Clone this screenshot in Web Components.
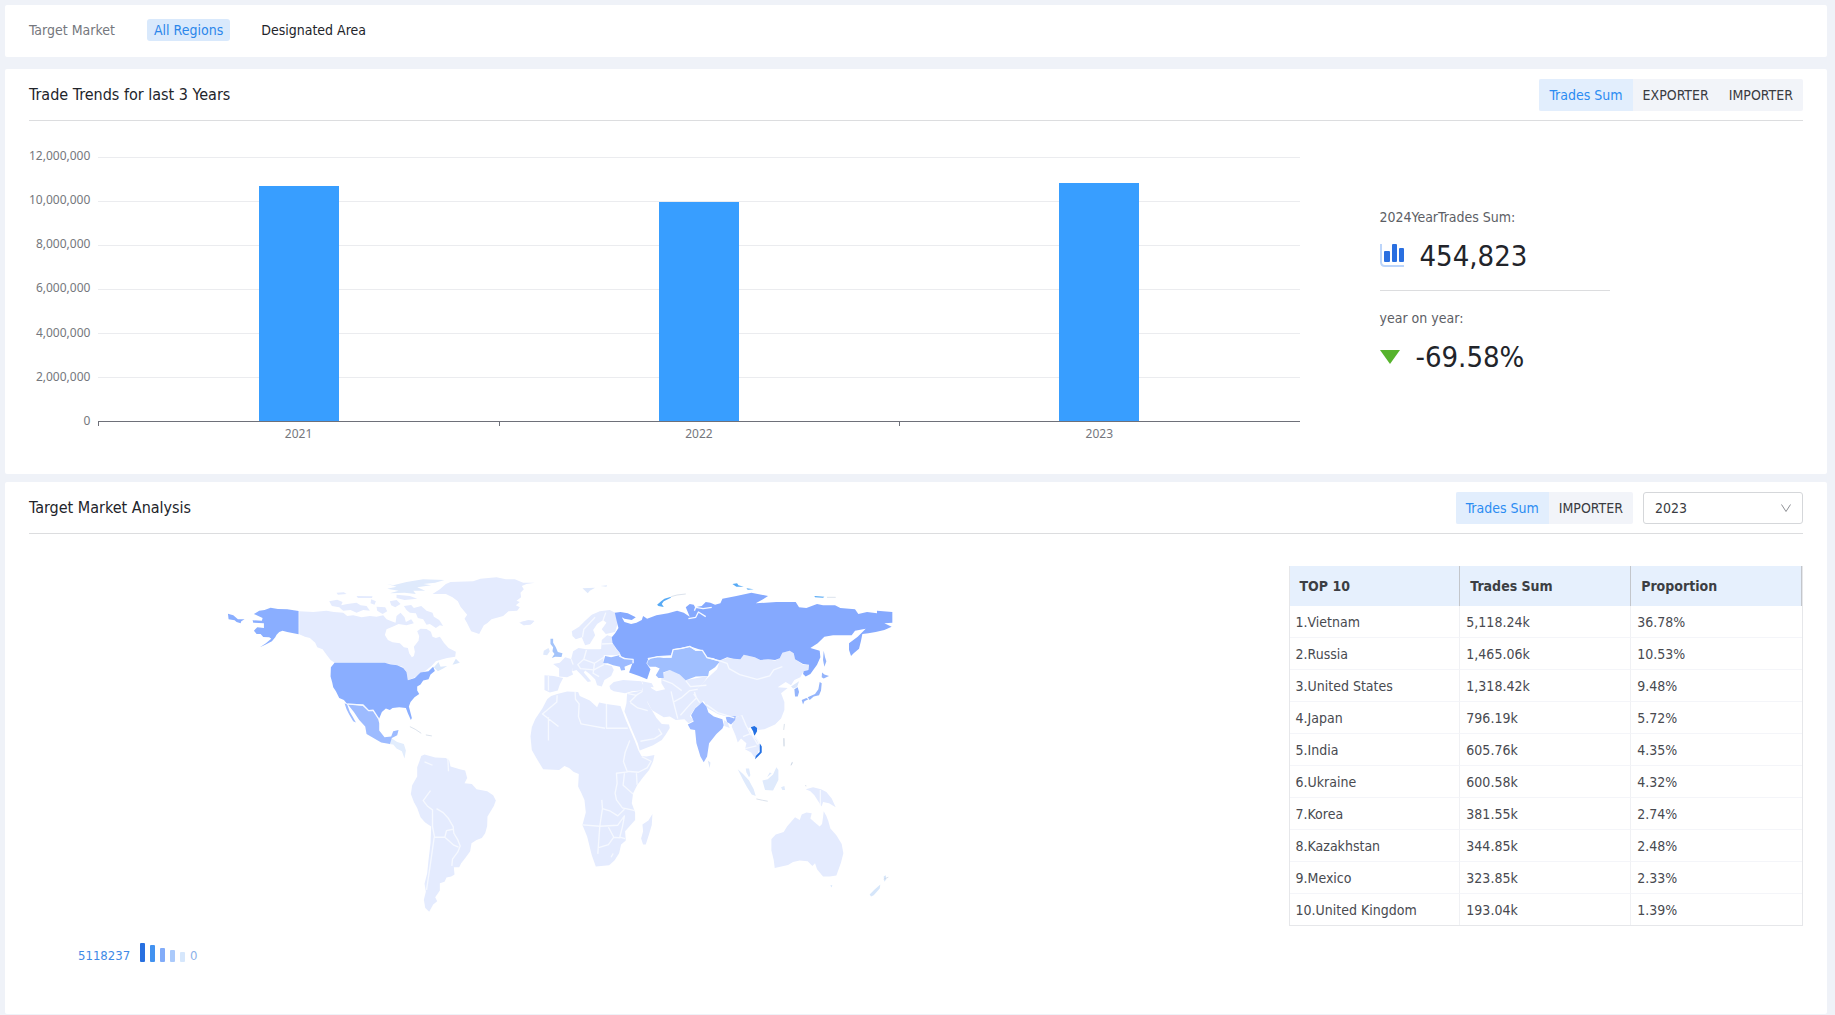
<!DOCTYPE html>
<html lang="en">
<head>
<meta charset="UTF-8">
<meta name="viewport" content="width=device-width, initial-scale=1">
<title>Target Market</title>
<style>
body{
    margin:0;
    background:#eff2f8;
    color:#22242a;
    font:14px/22px "DejaVu Sans Condensed",Tahoma,"Noto Sans",sans-serif;
}
</style>
</head>
<body>
<trade-dashboard></trade-dashboard>

<script>
class RegionFilter extends HTMLElement {

    constructor() {
        super();
        const shadowRoot = this.attachShadow({ mode: 'open' });
        shadowRoot.innerHTML = `
        <style>
        :host{
            display:flex;
            align-items:center;
            gap:32px;
            padding:14px 24px 16px;
            background:#fff;
            border-radius:2px;
        }
        .label{
            color:#75777d;
        }
        .items{
            display:flex;
            gap:24px;
        }
        button{
            padding:0 7px;
            border:0;
            border-radius:3px;
            background:none;
            color:inherit;
            font:inherit;
            cursor:pointer;
        }
        button[aria-pressed=true]{
            background:#d9e9fc;
            color:#2b86ea;
        }
        </style>
        <span class="label" id="label">Target Market</span>
        <div class="items" role="group" aria-labelledby="label">
            <button type="button" aria-pressed="true">All Regions</button>
            <button type="button" aria-pressed="false">Designated Area</button>
        </div>
        `
    }

    connectedCallback() {
        const buttons = [...this.shadowRoot.querySelectorAll('button')];
        buttons.forEach(el=>el.addEventListener('click',()=>{
            buttons.forEach(b=>b.setAttribute('aria-pressed', b===el));
        }))
    }
}

class PanelCard extends HTMLElement {

    constructor() {
        super();
        const shadowRoot = this.attachShadow({ mode: 'open' });
        shadowRoot.innerHTML = `
        <style>
        :host{
            display:block;
            padding:0 24px;
            background:#fff;
            border-radius:2px;
        }
        header{
            display:flex;
            align-items:center;
            justify-content:space-between;
            padding:10px 0 9px;
            border-bottom:1px solid #dcdddf;
        }
        h2{
            margin:0;
            font-size:16px;
            font-weight:400;
        }
        .extra{
            display:flex;
            gap:10px;
        }
        </style>
        <header>
            <h2>${this.getAttribute('heading')}</h2>
            <div class="extra"><slot name="extra"></slot></div>
        </header>
        <slot></slot>
        `
    }
}

class SegmentTabs extends HTMLElement {

    constructor() {
        super();
        const shadowRoot = this.attachShadow({ mode: 'open' });
        const items = this.getAttribute('items').split(',');
        shadowRoot.innerHTML = `
        <style>
        :host{
            display:flex;
            border-radius:2px;
            background:#f2f4f9;
            overflow:hidden;
        }
        button{
            height:32px;
            padding:0 10px;
            border:0;
            background:none;
            color:#3a3c42;
            font:inherit;
            cursor:pointer;
        }
        button[aria-selected=true]{
            background:#e2eefd;
            color:#2b8cf2;
        }
        </style>
        ${items.map((text,i)=>`<button type="button" role="tab" aria-selected="${i===0}">${text}</button>`).join('')}
        `
    }

    connectedCallback() {
        this.setAttribute('role', 'tablist');
        const tabs = [...this.shadowRoot.querySelectorAll('button')];
        tabs.forEach(el=>el.addEventListener('click',()=>{
            tabs.forEach(t=>t.setAttribute('aria-selected', t===el));
            this.dispatchEvent(new CustomEvent('change', {
                detail: {
                    value: el.textContent
                }
            }));
        }))
    }
}

class YearSelect extends HTMLElement {

    constructor() {
        super();
        const shadowRoot = this.attachShadow({ mode: 'open' });
        shadowRoot.innerHTML = `
        <style>
        :host{
            display:grid;
            width:160px;
            align-items:center;
        }
        select,svg{
            grid-area:1/1;
        }
        select{
            box-sizing:border-box;
            width:100%;
            height:32px;
            padding:0 11px;
            border:1px solid #d5d7da;
            border-radius:3px;
            background:#fff;
            color:#3a3c42;
            font:inherit;
            appearance:none;
        }
        svg{
            justify-self:end;
            margin-right:11px;
            pointer-events:none;
        }
        </style>
        <select aria-label="Year">
            <option>2023</option>
            <option>2022</option>
            <option>2021</option>
        </select>
        <svg width="12" height="12" viewBox="0 0 12 12" fill="none" stroke="#8e9095"><path d="M1.500 2.500 6 9.500l4.500-7"/></svg>
        `
    }
}

class BarChart extends HTMLElement {

    constructor() {
        super();
        const shadowRoot = this.attachShadow({ mode: 'open' });
        const max = 12000000;
        const step = 2000000;
        const data = [['2021',10700000],['2022',9940000],['2023',10840000]];
        const ticks = [];
        for (let v = max; v >= 0; v -= step) ticks.push(v);
        shadowRoot.innerHTML = `
        <style>
        :host{
            display:grid;
            grid-template-columns:max-content 1fr;
            column-gap:8px;
            color:#75777d;
            font:12px/20px "Noto Sans","Open Sans",sans-serif;
        }
        .scale{
            display:flex;
            flex-direction:column;
            justify-content:space-between;
            margin:-11px 0 -9px;
            text-align:right;
        }
        .plot{
            display:flex;
            height:264px;
            border-bottom:1px solid #6e7079;
            background:repeating-linear-gradient(#ebecef 0 1px,transparent 1px 44px);
        }
        .slot{
            display:flex;
            flex:1;
            align-items:flex-end;
            justify-content:center;
        }
        .bar{
            width:20%;
            background:#389eff;
        }
        .names{
            display:flex;
            grid-column:2;
        }
        .names span{
            flex:1;
            padding-top:2px;
            text-align:center;
            /* axis tick at the left end of each category */
            background:linear-gradient(#6e7079,#6e7079) 0 0/1px 4px no-repeat;
        }
        </style>
        <div class="scale">${ticks.map(v=>`<span>${v.toLocaleString('en-US')}</span>`).join('')}</div>
        <div class="plot">${data.map(([,v])=>`<div class="slot"><div class="bar" style="height:${v/max*100}%"></div></div>`).join('')}</div>
        <div class="names">${data.map(([name])=>`<span>${name}</span>`).join('')}</div>
        `
    }
}

class StatItem extends HTMLElement {

    constructor() {
        super();
        const shadowRoot = this.attachShadow({ mode: 'open' });
        shadowRoot.innerHTML = `
        <style>
        :host{
            display:block;
        }
        .label{
            margin-bottom:13px;
            color:#5c5e65;
        }
        .value{
            display:flex;
            align-items:center;
            gap:16px;
            font-size:29px;
            line-height:30px;
        }
        </style>
        <div class="label"><slot name="label"></slot></div>
        <div class="value"><slot name="icon"></slot><slot></slot></div>
        `
    }
}

// outlines are grouped by continent, each group has its own origin
const LAND = '#e4ebfe';
const MAP = [
    { at: '-30 0', shapes: [
        [LAND,'M268 154 310 156 350 152 372 156 400 158 412 168 430 166 455 172 480 168 500 170 520 166 530 178 545 184 557 188 560 168 572 158 584 172 588 186 604 178 612 190 590 196 566 192 548 200 530 208 525 225 534 240 548 247 570 250 582 262 594 264 598 280 606 292 612 288 615 275 612 260 626 242 628 228 622 214 632 206 650 207 663 215 668 230 678 234 690 230 702 248 716 264 738 275 736 290 712 294 698 298 678 304 665 318 640 338 615 352 594 361 590 335 578 320 555 314 525 308 374 308 362 300 350 284 338 268 322 262 316 248 300 234 285 230 268 223Z'],
        [LAND,'M582 138 604 135 612 144 634 138 650 152 668 158 672 170 688 180 700 198 690 196 678 204 660 192 650 194 640 178 624 174 618 160 600 158 590 150Z'],
        [LAND,'M358 124 382 119 398 126 394 136 412 132 440 128 452 136 470 138 480 152 460 150 440 158 422 150 400 152 388 142 366 138Z'],
        [LAND,'M484 118 498 124 494 134 482 130ZM500 140 526 142 532 154 518 162 502 152ZM540 124 560 120 572 132 556 142 544 136ZM560 104 600 108 622 116 584 120 560 114ZM380 98 402 97 410 102 384 104ZM440 108 488 109 486 114 444 114Z'],
        ['#dfeafc','M530 71 550 76 590 66 640 58 704 60 676 68 640 72 664 76 622 82 646 92 610 92 618 102 584 98 540 100 566 92 532 86 560 80Z'],
        [LAND,'M668 102 690 88 708 72 722 66 790 64 812 56 860 52 888 58 915 58 940 68 975 68 950 72 936 78 942 88 932 98 934 112 920 122 930 126 918 136 930 142 922 152 896 154 880 168 845 178 832 190 822 196 808 222 784 214 770 186 764 176 772 164 752 140 744 124 728 112 708 102Z'],
        [LAND,'M928 188 950 182 973 182 966 191 944 196Z'],
        ['#dbe8fb','M728 314 738 296 750 308ZM672 322 686 306 692 320 712 318 700 326 684 334Z'],
        ['#e2edfd','M536 552 546 536 562 546 582 552 588 572 584 596 576 574 560 566 550 554Z'],
        ['#8aaeff','M182 143 204 147 232 148 266 153 266 223 232 216 218 212 208 216 200 224 196 232 186 244 166 254 150 262 168 250 184 236 178 232 160 231 152 222 140 222 132 212 142 202 162 204 162 190 130 188 128 181 156 182 158 174 132 162 148 152 164 150Z'],
        ['#8aaeff','M54 161 70 166 84 178 104 178 94 184 92 190 80 186 74 181 56 178Z'],
        ['#8aaeff','M374 308 525 308 540 313 562 316 580 324 590 336 594 361 615 354 632 338 656 334 670 320 675 333 662 344 656 358 640 362 632 374 622 380 622 392 628 402 614 412 602 426 597 440 606 474 603 480 594 460 588 444 568 442 548 444 540 450 528 446 516 456 508 476 498 468 490 450 476 450 460 434 412 432 402 420 388 414 378 394 370 382 367 368 362 350 363 322Z'],
        ['#9dbbff','M414 434 458 437 475 452 489 452 504 474 508 490 508 512 524 532 544 530 550 514 566 510 562 526 546 534 540 552 514 548 470 522 466 500 448 480 432 456ZM404 430 412 434 420 456 428 470 438 488 430 484 418 464 410 448Z'],
    ], lines: ['M412 432 460 436 476 452 490 451 506 476'], thin: ['M600 500 616 508 634 520M648 525 666 528'] },
    { at: '480 510', shapes: [
        [LAND,'M124 78 134 74 150 78 166 83 198 84 208 92 212 110 240 118 256 122 262 144 254 160 276 162 290 178 322 184 340 196 348 212 342 228 323 260 322 288 316 310 306 324 290 330 275 340 271 364 258 382 244 400 238 412 222 412 224 434 214 440 200 443 194 456 180 460 180 482 166 502 172 514 160 524 148 546 136 534 132 510 138 486 134 462 142 430 146 390 152 340 154 290 136 278 122 262 112 234 102 216 93 192 97 166 112 140 112 112 118 96Z'],
    ], lines: ['M152 182 130 212 144 230 158 240 158 290 164 322 195 322 222 346 236 352','M170 236 190 248 206 266 220 290 222 310 234 330 241 348 234 366 218 388 216 408','M195 322 200 302 220 298','M163 322 152 400 140 480','M134 96 158 106 M204 86 206 124'] },
    { at: '870 30', shapes: [
        [LAND,'M142 372 172 365 205 366 210 378 240 392 262 412 268 398 290 402 332 408 338 424 348 450 360 478 374 510 386 542 395 558 410 560 434 555 430 574 418 600 400 622 382 646 370 670 366 700 376 728 376 750 362 766 346 784 348 812 334 824 328 850 314 872 298 886 258 890 246 856 232 800 218 765 228 728 224 690 214 668 205 650 207 612 192 606 178 594 164 588 148 600 100 598 80 565 66 540 62 500 66 472 76 448 98 415 112 388 124 378Z'],
        [LAND,'M428 732 426 765 418 792 408 824 400 824 394 806 400 784 398 764 416 752Z'],
        [LAND,'M299 348 312 336 340 330 395 334 400 346 396 362 366 364 346 370 312 364 302 358Z'],
        [LAND,'M352 370 398 362 408 376 414 400 426 420 440 444 456 462 478 464 480 474 468 494 456 510 430 526 390 542 384 520 366 478 344 424 350 400Z'],
        [LAND,'M104 316 132 318 160 324 150 344 144 362 120 368 104 360Z'],
        [LAND,'M130 282 150 278 166 262 186 268 190 284 186 304 190 314 172 322 148 320 148 296Z'],
        [LAND,'M190 244 206 234 230 238 270 238 288 234 282 256 280 282 306 288 312 300 304 318 284 330 276 350 262 346 256 328 240 312 226 302 222 308 244 334 234 336 212 312 200 300 188 304 184 268Z'],
        [LAND,'M186 184 208 170 226 152 246 134 270 124 300 120 316 128 324 160 316 186 288 192 276 178 290 158 280 150 262 162 250 180 256 196 240 222 226 226 216 202 198 208 188 198Z'],
        [LAND,'M276 210 292 196 308 200 308 216 318 236 334 252 318 256 282 256 274 236Z'],
        [LAND,'M396 334 426 340 432 352 404 350Z'],
        ['#dfe9fc','M102 242 116 234 120 244 112 256 100 254ZM218 55 256 53 240 62 234 70ZM272 48 292 46 290 50Z'],
        [LAND,'M32 156 56 150 74 153 62 164 40 166Z'],
        ['#a4c4fa','M122 206 130 206 130 218 138 232 144 246 158 250 155 261 136 260 126 264 134 252 128 244 130 232 122 222Z'],
    ], lines: ['M142 376 141 396 98 432 146 470','M196 366 197 388 208 402 206 440 214 462 246 468 286 475','M290 402 290 475 354 475','M116 442 116 512','M360 512 346 548 341 575 352 604 386 607 412 594 424 574 396 560','M354 606 320 610 322 640 316 670 320 690 338 714 376 722','M344 610 340 646 370 672','M380 610 382 645','M276 690 278 716 302 724 324 738 344 718','M218 765 270 769 324 766 344 738 338 770 330 802 346 806','M278 716 270 769 264 852','M264 834 296 824 312 802 296 772','M312 802 332 804','M304 862 310 851','M352 370 380 376 404 360','M362 398 384 414 414 422','M360 396 384 372','M392 514 434 506 456 492 446 476','M190 284 184 268M230 240 222 268 254 280 282 262M222 268 204 284 212 296 252 300 282 284M254 280 250 310 268 320','M218 202 222 178 256 142M288 128 280 150','M276 222 312 220','M116 318 116 362','M400 354 420 364'] },
    { at: '1110 30', shapes: [
        [LAND,'M156 344 174 340 186 356 200 364 226 358 215 340 215 312 240 300 270 310 290 330 355 318 340 340 322 358 340 386 338 398 322 408 312 420 300 438 312 452 296 460 284 448 258 450 240 440 222 442 202 430 186 420 172 394 160 372Z'],
        [LAND,'M390 272 412 264 432 266 452 268 462 254 495 262 512 270 535 268 556 272 570 265 578 248 600 242 612 250 616 268 640 284 658 284 654 300 640 306 632 322 614 330 604 346 588 336 564 352 594 354 574 370 584 396 584 420 574 446 556 464 524 478 506 480 490 470 476 474 462 460 455 436 434 444 410 440 384 432 352 414 344 396 322 376 324 356 356 322 382 298Z'],
        [LAND,'M436 444 455 435 464 462 478 478 488 496 502 512 510 530 504 552 494 562 484 548 466 538 470 520 454 506 444 518 438 498 426 470 430 456Z'],
        [LAND,'M402 450 414 458 420 474 404 468Z'],
        ['#dce7fb','M604 350 628 334 622 352 610 356ZM354 572 362 578 360 594Z'],
        ['#85a9fe','M75 128 92 126 114 130 138 142 126 150 104 146 96 142 104 156 124 162 140 158 156 150 160 138 172 146 200 136 235 130 262 122 282 128 300 140 288 112 300 102 312 104 316 112 336 108 348 96 362 98 376 104 392 100 398 86 440 78 485 68 535 78 520 88 498 100 560 96 618 96 628 112 650 114 682 102 700 106 736 106 752 114 796 118 806 132 832 126 862 130 862 122 908 126 908 158 884 160 906 170 884 180 858 186 836 190 818 192 814 212 808 236 792 250 784 258 778 240 778 220 804 200 828 176 796 182 786 196 730 196 704 200 684 220 662 234 690 242 692 262 682 284 662 312 648 320 640 312 642 304 656 300 658 284 640 282 616 268 612 250 600 242 578 248 570 265 556 270 535 268 512 270 495 262 462 254 452 268 432 266 412 262 388 272 370 264 350 262 334 240 300 229 250 238 244 256 206 258 176 266 170 280 182 298 172 328 148 318 118 308 130 274 108 264 95 262 90 248 80 236 68 218 66 202 76 190 86 174 80 150Z'],
        ['#a0bfff','M174 272 186 264 208 260 222 264 244 262 250 240 276 236 300 231 318 242 338 242 352 264 390 275 376 292 358 304 355 318 318 320 288 331 270 314 240 300 220 308 222 324 206 324 198 316 210 296 198 290 180 290 172 282Z'],
        ['#9dbbff','M46 258 64 262 88 256 104 266 128 268 130 280 104 290 106 300 94 302 90 290 70 286 54 280 40 280Z'],
        ['#9bb8ff','M338 396 350 410 356 428 372 440 398 448 402 466 398 476 380 492 358 520 352 560 342 577 332 560 320 520 316 480 302 478 294 464 312 455 304 436 316 416ZM408 442 438 438 436 450 424 464 412 456Z'],
        ['#94b4fb','M614 358 624 352 628 366 624 380 616 380ZM690 336 696 340 694 362 688 376 672 380 660 390 654 382 676 372 686 358ZM636 390 650 384 656 388 644 394 640 404ZM697 308 704 314 718 318 702 326 696 322ZM702 242 706 262 710 274 704 290 700 270Z'],
        ['#2471e4','M483 472 494 468 502 474 502 484 494 498 490 484ZM510 520 516 530 516 548 506 558 496 568 498 558 510 546Z'],
        ['#57aaf5','M202 104 214 94 224 86 244 80 242 84 222 94 216 102 222 111 206 108ZM428 42 442 40 446 46 462 50 440 50ZM470 55 492 58 474 59ZM674 78 704 80 700 83 676 82Z'],
    ], lines: ['M388 272 412 280 418 296 450 314 502 328 540 318 552 300 578 290','M174 266 206 260 244 262 250 239 276 235 300 229 318 241 338 241 352 263 388 272','M244 364 252 400 264 446','M252 396 274 384 300 362 322 358','M218 330 246 340 276 362','M272 436 300 404 320 384 314 366','M288 332 302 350 350 346','M312 372 330 398M350 404 384 428 434 444','M456 436 470 468 484 496M460 500 484 490 504 524M466 536 500 528','M494 497 510 520','M88 258 104 266 130 268 130 280','M296 146 318 142 326 126 348 140M314 122 318 112 340 116 366 112'], thin: ['M244 80 262 75 288 72M584 462 582 480M583 505 583 528M604 586 608 576M712 82 738 82'] },
    { at: '1380 360', shapes: [
        [LAND,'M275 478 288 464 312 456 322 440 346 412 360 420 366 404 380 398 396 400 392 416 408 430 420 440 427 432 430 412 432 394 440 408 446 424 452 446 470 466 486 492 491 520 484 548 470 587 450 590 430 590 412 568 406 550 398 558 384 544 360 542 340 546 325 555 285 564 282 540 275 512Z'],
        [LAND,'M378 328 400 322 424 328 440 336 456 356 468 382 448 370 430 366 426 380 414 362 404 346 392 334Z'],
        ['#dfeafc','M174 268 190 282 208 302 222 328 228 348 216 344 202 322 190 300ZM198 266 208 266 212 286 208 292 200 278ZM248 302 264 298 280 284 290 262 296 270 296 300 280 332 256 330ZM262 292 276 280 270 278ZM304 322 314 318 316 330 308 330Z'],
        ['#d6e6fa','M570 644 584 630 602 614 600 626 582 646 574 650ZM612 590 618 586 620 598 614 606ZM452 616 458 616 455 623Z'],
    ], lines: ['M422 330 422 376'], thin: ['M230 357 248 361 264 364M312 175 313 200M334 256 338 248M376 317 380 318M612 598 626 592'] },
];

class WorldMap extends HTMLElement {

    constructor() {
        super();
        const shadowRoot = this.attachShadow({ mode: 'open' });
        const group = ({ at, shapes, lines, thin = [] })=>`
            <g transform="translate(${at})">
                ${shapes.map(([fill,d])=>`<path fill="${fill}" d="${d}"/>`).join('')}
                <path class="line" d="${lines.join('')}"/>
                <path class="thin" d="${thin.join('')}"/>
            </g>`;
        shadowRoot.innerHTML = `
        <style>
        :host{
            display:block;
        }
        svg{
            display:block;
            width:100%;
        }
        .line,.thin{
            fill:none;
            stroke:#f6f9ff;
            stroke-width:4;
            stroke-linejoin:round;
        }
        .thin{
            stroke:#c9d3e2;
            stroke-width:2;
        }
        </style>
        <svg viewBox="-573 0 3780 1080" role="img" aria-label="Trades by country">${MAP.map(group).join('')}</svg>
        `
    }
}

class MapLegend extends HTMLElement {

    constructor() {
        super();
        const shadowRoot = this.attachShadow({ mode: 'open' });
        const bars = [['#2870e0',19],['#4292f0',17],['#82acf9',14],['#abcafb',12],['#d6e7fc',10]];
        shadowRoot.innerHTML = `
        <style>
        :host{
            display:flex;
            align-items:flex-end;
            color:#3f8ae6;
            font-size:13px;
            line-height:13px;
        }
        .bars{
            display:flex;
            align-items:flex-end;
            gap:5px;
            margin:0 5px 0 10px;
        }
        i{
            width:5px;
            border-radius:1px;
        }
        .min{
            color:#8bb1ea;
        }
        </style>
        <span>5118237</span>
        <div class="bars">${bars.map(([color,h])=>`<i style="height:${h}px;background:${color}"></i>`).join('')}</div>
        <span class="min">0</span>
        `
    }
}

class RankTable extends HTMLElement {

    constructor() {
        super();
        const shadowRoot = this.attachShadow({ mode: 'open' });
        const rows = [
            ['Vietnam','5,118.24k','36.78%'],
            ['Russia','1,465.06k','10.53%'],
            ['United States','1,318.42k','9.48%'],
            ['Japan','796.19k','5.72%'],
            ['India','605.76k','4.35%'],
            ['Ukraine','600.58k','4.32%'],
            ['Korea','381.55k','2.74%'],
            ['Kazakhstan','344.85k','2.48%'],
            ['Mexico','323.85k','2.33%'],
            ['United Kingdom','193.04k','1.39%'],
        ];
        shadowRoot.innerHTML = `
        <style>
        :host{
            display:block;
        }
        table{
            width:100%;
            table-layout:fixed;
            border-collapse:separate;
            border-spacing:0;
            border:1px solid #e6e7ea;
            border-top:0;
            color:#484a50;
            text-align:left;
        }
        th{
            height:40px;
            padding:0 10px;
            background:#e6f0fd;
            border-right:1px solid #c3c6cb;
            color:#3c3e43;
            font-weight:700;
        }
        td{
            height:31px;
            padding:0 6px;
            border-right:1px solid #f0f1f4;
            border-bottom:1px solid #f4f5f9;
        }
        td:last-child{
            border-right:0;
        }
        tr:last-child td{
            border-bottom:0;
        }
        </style>
        <table>
            <thead><tr><th scope="col">TOP 10</th><th scope="col">Trades Sum</th><th scope="col">Proportion</th></tr></thead>
            <tbody>${rows.map(([name,sum,rate],i)=>`<tr><td>${i+1}.${name}</td><td>${sum}</td><td>${rate}</td></tr>`).join('')}</tbody>
        </table>
        `
    }
}

class TradeDashboard extends HTMLElement {

    constructor() {
        super();
        const shadowRoot = this.attachShadow({ mode: 'open' });
        shadowRoot.innerHTML = `
        <style>
        :host{
            box-sizing:border-box;
            display:flex;
            flex-direction:column;
            min-height:100vh;
            padding:5px 8px 1px 5px;
        }
        region-filter{
            margin-bottom:12px;
        }
        .trends{
            margin-bottom:8px;
        }
        .analysis{
            flex:1;
        }
        .trend-body{
            display:grid;
            grid-template-columns:3fr 1fr;
            gap:80px;
            padding:36px 0 30px;
        }
        .stats{
            padding-top:49px;
        }
        .stats hr{
            width:230px;
            margin:19px 0 16px;
            border:0;
            border-top:1px solid #dcdddf;
        }
        .market-body{
            display:grid;
            grid-template-columns:71fr 29fr;
            padding-top:32px;
        }
        world-map{
            margin-top:-6px;
        }
        map-legend{
            margin:23px 0 0 49px;
        }
        svg{
            display:block;
        }
        </style>
        <region-filter></region-filter>
        <panel-card class="trends" heading="Trade Trends for last 3 Years">
            <segment-tabs slot="extra" items="Trades Sum,EXPORTER,IMPORTER"></segment-tabs>
            <div class="trend-body">
                <bar-chart></bar-chart>
                <div class="stats">
                    <stat-item>
                        <span slot="label">2024YearTrades Sum:</span>
                        <svg slot="icon" width="24" height="24" viewBox="0 0 24 24">
                            <path d="M1 0v18q0 4 4 4h19" fill="none" stroke="#bcd5fa" stroke-width="2"/>
                            <g fill="#2a6fe0"><rect x="4" y="7" width="6" height="11" rx="1"/><rect x="12" y="0" width="5" height="18" rx="1"/><rect x="19" y="4" width="5" height="14" rx="1"/></g>
                        </svg>
                        454,823
                    </stat-item>
                    <hr>
                    <stat-item>
                        <span slot="label">year on year:</span>
                        <svg slot="icon" width="20" height="14" viewBox="0 0 20 14"><path d="M0 0h20L10 14z" fill="#56b32c"/></svg>
                        -69.58%
                    </stat-item>
                </div>
            </div>
        </panel-card>
        <panel-card class="analysis" heading="Target Market Analysis">
            <segment-tabs slot="extra" items="Trades Sum,IMPORTER"></segment-tabs>
            <year-select slot="extra"></year-select>
            <div class="market-body">
                <div>
                    <world-map></world-map>
                    <map-legend></map-legend>
                </div>
                <rank-table></rank-table>
            </div>
        </panel-card>
        `
    }
}

customElements.define('region-filter', RegionFilter);
customElements.define('panel-card', PanelCard);
customElements.define('segment-tabs', SegmentTabs);
customElements.define('year-select', YearSelect);
customElements.define('bar-chart', BarChart);
customElements.define('stat-item', StatItem);
customElements.define('world-map', WorldMap);
customElements.define('map-legend', MapLegend);
customElements.define('rank-table', RankTable);
customElements.define('trade-dashboard', TradeDashboard);
</script>
</body>
</html>
